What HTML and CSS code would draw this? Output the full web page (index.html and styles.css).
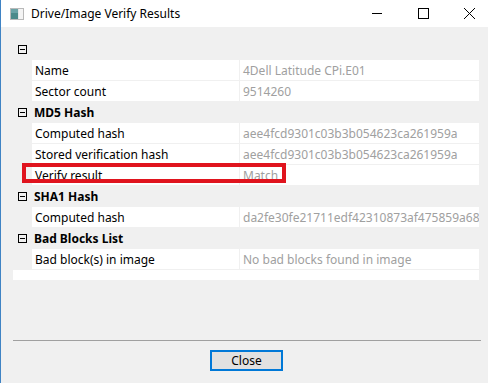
FILE: index.html
```html
<!DOCTYPE html>
<html lang="en">
<head>
    <meta charset="UTF-8">
    <title>Drive/Image Verify Results</title>
    <link rel="stylesheet" href="styles.css">
</head>
<body>
    <div class="okno">
        <div class="pasek-tytulu">
            <svg class="ikona" width="14" height="12" viewBox="0 0 14 12">
                <rect x="0.5" y="0.5" width="13" height="11" fill="#e6e6e6" stroke="#b9b9b9"/>
                <rect x="1" y="1" width="7" height="10" fill="#4b8a8a"/>
                <rect x="1" y="1" width="7" height="4" fill="#6aa3a6"/>
                <rect x="9" y="1" width="4" height="10" fill="#f4f4f4"/>
            </svg>
            <span class="tytul">Drive/Image Verify Results</span>
            <div class="przyciski-okna">
                <svg width="46" height="27" viewBox="0 0 46 27"><path d="M18 13.5h10" stroke="#000" stroke-width="1"/></svg>
                <svg width="46" height="27" viewBox="0 0 46 27"><rect x="18.5" y="8.5" width="10" height="10" fill="none" stroke="#000"/></svg>
                <svg width="46" height="27" viewBox="0 0 46 27"><path d="M18 8l11 11M29 8l-11 11" stroke="#000" stroke-width="1"/></svg>
            </div>
        </div>

        <div class="siatka">
            <div class="kategoria"><span class="zwin"></span><span></span></div>
            <div class="wiersz"><span class="etykieta">Name</span><span class="wartosc">4Dell Latitude CPi.E01</span></div>
            <div class="wiersz"><span class="etykieta">Sector count</span><span class="wartosc">9514260</span></div>

            <div class="kategoria"><span class="zwin"></span><span>MD5 Hash</span></div>
            <div class="wiersz"><span class="etykieta">Computed hash</span><span class="wartosc">aee4fcd9301c03b3b054623ca261959a</span></div>
            <div class="wiersz"><span class="etykieta">Stored verification hash</span><span class="wartosc">aee4fcd9301c03b3b054623ca261959a</span></div>
            <div class="wiersz zaznaczony"><span class="etykieta">Verify result</span><span class="wartosc">Match</span></div>

            <div class="kategoria"><span class="zwin"></span><span>SHA1 Hash</span></div>
            <div class="wiersz"><span class="etykieta">Computed hash</span><span class="wartosc">da2fe30fe21711edf42310873af475859a68</span></div>

            <div class="kategoria"><span class="zwin"></span><span>Bad Blocks List</span></div>
            <div class="wiersz"><span class="etykieta">Bad block(s) in image</span><span class="wartosc">No bad blocks found in image</span></div>
        </div>

        <div class="separator"></div>
        <div class="stopka">
            <button class="zamknij">Close</button>
        </div>
    </div>
</body>
</html>
```

FILE: styles.css
```css
body {
    margin: 0;
    font-family: "Noto Sans", "Liberation Sans", sans-serif;
    font-size: 12px;
    background: #f0f0f0;
}
.okno {
    width: 487px;
    height: 383px;
    border-left: 1px solid #3f83c4;
    background: #f0f0f0;
    display: flex;
    flex-direction: column;
    overflow: hidden;
}
.pasek-tytulu {
    height: 27px;
    background: #ffffff;
    display: flex;
    align-items: center;
}
.ikona {
    margin-left: 9px;
    margin-right: 7px;
}
.tytul {
    color: #000;
    font-size: 12px;
    flex: 1;
}
.przyciski-okna {
    display: flex;
    margin-right: -4px;
}
.siatka {
    margin: 12px 0 0 12px;
    width: 466px;
    height: 241px;
    background: #ffffff;
    position: relative;
}
.kategoria,
.wiersz {
    height: 21px;
    display: flex;
    align-items: center;
    box-sizing: border-box;
    white-space: nowrap;
}
.kategoria {
    background: #f0f0f0;
    font-weight: bold;
}
.zwin {
    width: 9px;
    height: 9px;
    box-sizing: border-box;
    border: 1px solid #000;
    margin: 0 7px 0 5px;
    position: relative;
}
.zwin::after {
    content: "";
    position: absolute;
    left: 1px;
    top: 3px;
    width: 5px;
    height: 1px;
    background: #000;
}
.wiersz {
    border-left: 19px solid #f0f0f0;
    border-bottom: 1px solid #f0f0f0;
}
.etykieta {
    width: 208px;
    padding-left: 3px;
    box-sizing: border-box;
    height: 100%;
    display: flex;
    align-items: center;
    border-right: 1px solid #f0f0f0;
    color: #000;
}
.wartosc {
    padding-left: 3px;
    color: #a0a0a0;
    overflow: hidden;
    flex: 1;
}
.zaznaczony {
    position: relative;
}
.zaznaczony::after {
    content: "";
    position: absolute;
    left: -10px;
    top: -2px;
    width: 264px;
    height: 20px;
    border: 4px solid #e0141e;
    box-sizing: border-box;
}
.separator {
    margin: 60px 7px 0 12px;
    height: 1px;
    background: #a0a0a0;
}
.stopka {
    display: flex;
    justify-content: center;
    padding-top: 9px;
}
.zamknij {
    width: 73px;
    height: 21px;
    margin-left: 4px;
    font-family: inherit;
    font-size: 12px;
    background: #e1e1e1;
    border: 2px solid #0078d7;
    padding: 0;
    color: #000;
}
```
